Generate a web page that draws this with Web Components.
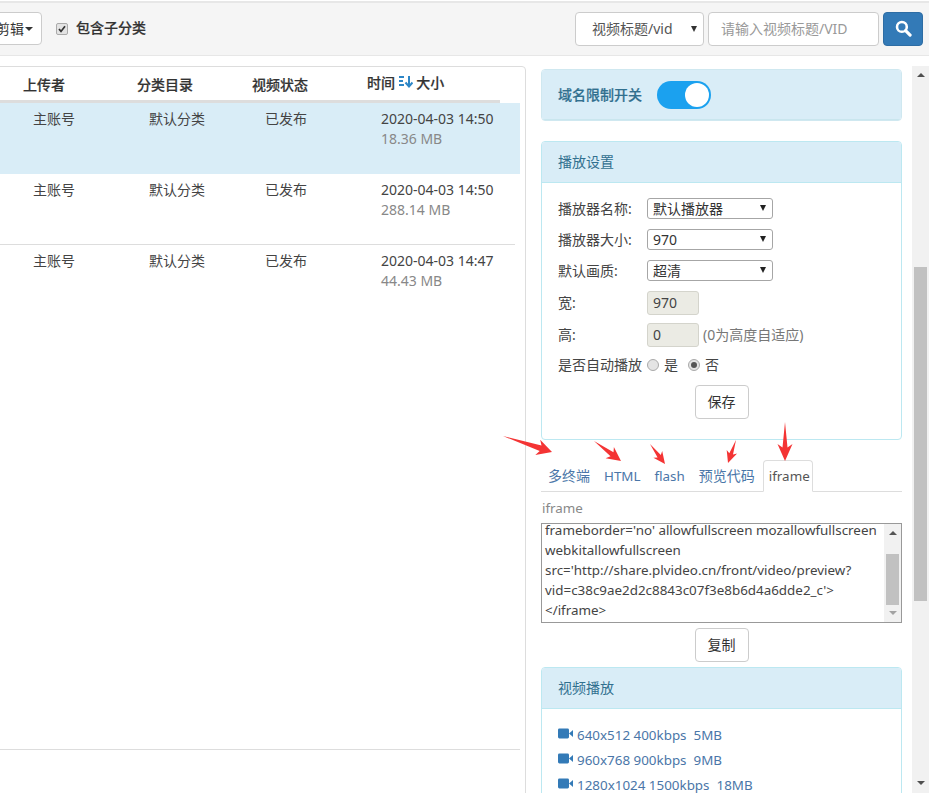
<!DOCTYPE html>
<html lang="zh">
<head>
<meta charset="utf-8">
<title>视频管理</title>
<style>
  html, body { margin: 0; padding: 0; background: #fff; }
  body {
    width: 949px;
    height: 793px;
    overflow: hidden;
    font: 14px/20px "Noto Sans", "Noto Sans CJK SC", sans-serif;
    color: #333;
  }
</style>
</head>
<body>
<vod-page>
  <vod-toolbar slot="top"></vod-toolbar>
  <vod-table slot="left">
    <vod-row slot="rows" active time="2020-04-03 14:50" size="18.36 MB"></vod-row>
    <vod-row slot="rows" time="2020-04-03 14:50" size="288.14 MB"></vod-row>
    <vod-row slot="rows" last time="2020-04-03 14:47" size="44.43 MB"></vod-row>
  </vod-table>
  <vod-side slot="right">
    <vod-panel plain>
      <span slot="title">域名限制开关</span>
      <vod-toggle slot="title"></vod-toggle>
    </vod-panel>
    <vod-player-form></vod-player-form>
    <vod-share></vod-share>
    <vod-panel>
      <span slot="title">视频播放</span>
      <vod-bitrates></vod-bitrates>
    </vod-panel>
  </vod-side>
  <vod-scrollbar slot="scroll"></vod-scrollbar>
  <vod-arrows slot="over"></vod-arrows>
</vod-page>

<script>
const shared = `
  * { box-sizing: border-box; }
`;

function define(name, html, extra) {
  class El extends HTMLElement {
    constructor() {
      super();
      this.attachShadow({ mode: "open" });
      this.shadowRoot.innerHTML = html;
      if (extra) extra(this);
    }
  }
  customElements.define(name, El);
}

define("vod-page", `
  <style>${shared}
    :host { display: block; position: relative; width: 949px; height: 793px; overflow: hidden; }
    .top { width: 929px; padding-top: 1px; }
    .main { display: flex; margin-top: 10px; width: 929px; height: 727px; }
    .l { display: block; flex: 0 0 526px; overflow: hidden; }
    .r { flex: 0 0 361px; margin-left: 15px; padding-top: 3px; overflow: hidden; }
    .s { flex: 0 0 17px; margin-left: 10px; }
  </style>
  <div class="top"><slot name="top"></slot></div>
  <div class="main">
    <div class="l"><slot name="left"></slot></div>
    <div class="r"><slot name="right"></slot></div>
    <div class="s"><slot name="scroll"></slot></div>
  </div>
  <slot name="over"></slot>
`);

define("vod-select", `
  <style>${shared}
    :host { display: block; }
    .box {
      display: flex; align-items: center; justify-content: space-between;
      width: 126px; height: 21px; padding: 0 6px 0 5px;
      background: #fff; border: 1px solid #a6a6a6; border-radius: 3px;
      color: #333; line-height: 19px;
    }
    .arrow { width: 0; height: 0; border-left: 3.5px solid transparent; border-right: 3.5px solid transparent; border-top: 6px solid #222; margin-top: -2px; }
  </style>
  <div class="box"><span><slot></slot></span><i class="arrow"></i></div>
`);

define("vod-button", `
  <style>${shared}
    :host { display: block; width: 54px; height: 34px; }
    .b {
      display: flex; align-items: center; justify-content: center;
      width: 100%; height: 100%;
      background: #fff; border: 1px solid #ccc; border-radius: 4px; color: #333;
    }
  </style>
  <div class="b"><slot></slot></div>
`);

define("vod-toolbar", `
  <style>${shared}
    :host { display: block; }
    .bar {
      display: flex; align-items: center; height: 55px; padding: 0 6px 1px 0;
      background: #f5f5f5; border-top: 2px solid #e7e7e7; border-bottom: 1px solid #e7e7e7;
      overflow: hidden;
    }
    .clip {
      display: flex; align-items: center; flex: none; width: 65px; height: 33px; margin-left: -23px;
      padding-left: 18px; background: #fff; border: 1px solid #ccc; border-radius: 4px;
      white-space: nowrap; color: #333;
    }
    .caret { display: inline-block; width: 0; height: 0; margin-left: 1px; border-left: 4px solid transparent; border-right: 4px solid transparent; border-top: 4px solid #333; }
    .check { flex: none; width: 12px; height: 12px; margin-left: 14px; border: 1px solid #aaa; border-radius: 2px; background: #e3e3e3; display: flex; }
    label { margin: -1px 0 0 8px; font-weight: 500; flex: none; color: #333; -webkit-text-stroke: 0.2px #333; }
    .spacer { flex: 1; }
    .sel {
      display: flex; align-items: center; justify-content: space-between;
      flex: none; width: 129px; height: 34px; padding: 0 6px 0 16px;
      background: #fff; border: 1px solid #ccc; border-radius: 4px; color: #555;
    }
    .arrow { width: 0; height: 0; border-left: 3.5px solid transparent; border-right: 3.5px solid transparent; border-top: 6px solid #333; }
    .inp {
      display: flex; align-items: center; flex: none; width: 171px; height: 34px; margin-left: 4px; padding-left: 12px;
      background: #fff; border: 1px solid #ccc; border-radius: 4px; color: #999;
    }
    .go {
      display: flex; align-items: center; justify-content: center;
      flex: none; width: 40px; height: 34px; margin-left: 4px;
      background: #337ab7; border: 1px solid #2e6da4; border-radius: 4px;
    }
  </style>
  <div class="bar">
    <div class="clip"><span>剪辑</span><i class="caret"></i></div>
    <span class="check"><svg width="10" height="10" viewBox="0 0 10 10"><path d="M2 5l2 2.4L8 2.2" fill="none" stroke="#333" stroke-width="1.7"/></svg></span>
    <label>包含子分类</label>
    <span class="spacer"></span>
    <div class="sel"><span>视频标题/vid</span><i class="arrow"></i></div>
    <div class="inp">请输入视频标题/VID</div>
    <div class="go"><svg width="17" height="17" viewBox="0 0 16 16"><circle cx="6.5" cy="6.5" r="4.6" fill="none" stroke="#fff" stroke-width="2.4"/><path d="M10 10l4.2 4.2" stroke="#fff" stroke-width="3" stroke-linecap="round"/></svg></div>
  </div>
`);

define("vod-table", `
  <style>${shared}
    :host { display: block; }
    .panel {
      position: relative; width: 536px; height: 740px; margin-left: -10px;
      background: #fff; border: 1px solid #ddd; border-radius: 4px;
    }
    .head {
      display: grid; grid-template-columns: 114px 115px 115px auto; align-items: center;
      width: 509px; height: 36px; padding: 2px 0 0 32px;
      border-bottom: 3px solid #ddd; font-weight: 500; color: #333; -webkit-text-stroke: 0.2px #333;
    }
    .head span { display: block; }
    .time { display: flex; align-items: center; gap: 5px; margin-top: -4px; }
    .rows { width: 529px; }
    .foot { position: absolute; left: 0; top: 682px; width: 529px; height: 1px; background: #ddd; }
  </style>
  <div class="panel">
    <div class="head">
      <span>上传者</span><span>分类目录</span><span>视频状态</span>
      <span class="time">时间
        <svg width="14" height="13" viewBox="0 0 14 13"><path d="M0 2h5M0 6h4M0 10h5" stroke="#2d86c6" stroke-width="2"/><path d="M10 1v10M6.5 7.5L10 11.5l3.5-4" fill="none" stroke="#2d86c6" stroke-width="2"/></svg>
        大小</span>
    </div>
    <div class="rows"><slot name="rows"></slot></div>
    <div class="foot"></div>
  </div>
`);

class VodRow extends HTMLElement {
  constructor() {
    super();
    this.attachShadow({ mode: "open" });
  }
  connectedCallback() {
    const active = this.hasAttribute("active");
    const last = this.hasAttribute("last");
    this.shadowRoot.innerHTML = `
      <style>${shared}
        :host { display: block; }
        .row {
          display: grid; grid-template-columns: 116px 116px 116px auto;
          height: 71px; padding: 6px 0 0 42px;
          background: ${active ? "#d9edf7" : "#fff"};
          border-bottom: 1px solid ${active ? "#d9edf7" : last ? "#fff" : "#ddd"};
          ${active ? "" : "margin-right: 5px;"}
          color: #444;
        }
        small { display: block; font-size: 14px; color: #888; }
      </style>
      <div class="row">
        <span>主账号</span><span>默认分类</span><span>已发布</span>
        <span>${this.getAttribute("time")}<small>${this.getAttribute("size")}</small></span>
      </div>`;
  }
}
customElements.define("vod-row", VodRow);

define("vod-side", `
  <style>${shared}
    :host { display: block; width: 361px; }
    ::slotted(vod-panel), ::slotted(vod-player-form) { margin-bottom: 20px; }
  </style>
  <slot></slot>
`);

define("vod-panel", `
  <style>${shared}
    :host { display: block; }
    .p { background: #fff; border: 1px solid #bce8f1; border-radius: 4px; overflow: hidden; }
    .h {
      display: flex; align-items: center; gap: 15px; height: 41px; padding: 0 16px;
      background: #d9edf7; color: #31708f;
    }
    .b { padding: 0 16px; }
    :host([plain]) .p { border-color: #cfe8f0; }
    :host([plain]) .h { height: 50px; font-weight: 500; -webkit-text-stroke: 0.2px #31708f; box-shadow: inset 0 -1px #c9e6ee; }
    :host([plain]) .b { display: none; }
    :host(:not([plain])) .h { border-bottom: 1px solid #bce8f1; }
  </style>
  <div class="p">
    <div class="h"><slot name="title"></slot></div>
    <div class="b"><slot></slot></div>
  </div>
`);

define("vod-toggle", `
  <style>${shared}
    :host { display: block; width: 54px; height: 28px; -webkit-text-stroke: 0; }
    .t { display: flex; justify-content: flex-end; align-items: center; height: 100%; padding: 2px; background: #1ba1ef; border-radius: 14px; }
    .k { width: 24px; height: 24px; border-radius: 50%; background: #fff; }
  </style>
  <div class="t"><i class="k"></i></div>
`);

define("vod-player-form", `
  <style>${shared}
    :host { display: block; }
    .f { display: flex; flex-direction: column; padding: 15px 0 20px; }
    .r { display: grid; grid-template-columns: 89px auto; align-items: center; color: #444; }
    .sel { height: 21px; margin-bottom: 10px; }
    .inp { height: 24px; margin-bottom: 8px; }
    .field { display: flex; align-items: center; gap: 4px; }
    .box {
      display: flex; align-items: center; width: 52px; height: 24px; padding-left: 5px;
      background: #ebebe4; border: 1px solid #d4d4cc; border-radius: 3px; color: #444;
    }
    .hint { color: #777; }
    .radio { margin-top: 0; height: 20px; margin-bottom: 10px; }
    .opts { display: flex; align-items: center; }
    .rb { width: 12px; height: 12px; border-radius: 50%; background: #e4e4e4; border: 1px solid #aaa; display: flex; align-items: center; justify-content: center; }
    .rb i { width: 6px; height: 6px; border-radius: 50%; background: #555; }
    .opts span { margin: 0 10px 0 5px; }
    .save { display: flex; justify-content: center; }
  </style>
  <vod-panel>
    <span slot="title">播放设置</span>
    <div class="f">
      <div class="r sel"><span>播放器名称:</span><vod-select>默认播放器</vod-select></div>
      <div class="r sel"><span>播放器大小:</span><vod-select>970</vod-select></div>
      <div class="r sel"><span>默认画质:</span><vod-select>超清</vod-select></div>
      <div class="r inp"><span>宽:</span><div class="field"><div class="box">970</div></div></div>
      <div class="r inp"><span>高:</span><div class="field"><div class="box">0</div><span class="hint">(0为高度自适应)</span></div></div>
      <div class="r radio"><span>是否自动播放</span><div class="opts"><i class="rb"></i><span>是</span><i class="rb"><i></i></i><span>否</span></div></div>
      <div class="save"><vod-button>保存</vod-button></div>
    </div>
  </vod-panel>
`);

define("vod-share", `
  <style>${shared}
    :host { display: block; }
    .tabs { display: flex; align-items: flex-end; height: 32px; padding-left: 1px; width: 362px; border-bottom: 1px solid #ddd; }
    .tab { height: 31px; line-height: 32px; padding: 0 6px; margin-right: 2px; color: #4a76a8; }
    .tab.lat { font-size: 13.4px; }
    .tab.on { flex: none; width: 50px; height: 32px; line-height: 30px; padding: 0 5px; color: #555; background: #fff; border: 1px solid #ddd; border-bottom-color: #fff; border-radius: 4px 4px 0 0; margin-bottom: -1px; }
    .label { margin: 6px 0 5px 1px; height: 20px; font-size: 13.4px; color: #888; line-height: 20px; }
    .code { display: flex; height: 100px; border: 1px solid #999; overflow: hidden; }
    .text { flex: 1; min-width: 0; padding: 0 0 0 3px; margin-top: -4px; white-space: nowrap; font-size: 13.4px; color: #444; }
    .bar { display: flex; flex-direction: column; align-items: center; flex: 0 0 17px; background: #f1f1f1; }
    .thumb { flex: none; width: 13px; height: 51px; margin: 19px 0 0; background: #c1c1c1; }
    .up, .dn { flex: none; width: 0; height: 0; border-left: 4px solid transparent; border-right: 4px solid transparent; }
    .up { margin-top: 7px; border-bottom: 4px solid #555; }
    .dn { margin-top: 6px; border-top: 4px solid #a3a3a3; }
    .copy { display: flex; justify-content: center; margin: 5px 0; }
  </style>
  <div class="tabs">
    <div class="tab">多终端</div><div class="tab lat">HTML</div><div class="tab lat">flash</div><div class="tab">预览代码</div><div class="tab lat on">iframe</div>
  </div>
  <div class="label">iframe</div>
  <div class="code">
    <div class="text">frameborder='no' allowfullscreen mozallowfullscreen<br>webkitallowfullscreen<br>src='http://share.plvideo.cn/front/video/preview?<br>vid=c38c9ae2d2c8843c07f3e8b6d4a6dde2_c'&gt;<br>&lt;/iframe&gt;</div>
    <div class="bar"><i class="up"></i><i class="thumb"></i><i class="dn"></i></div>
  </div>
  <div class="copy"><vod-button>复制</vod-button></div>
`);

define("vod-bitrates", `
  <style>${shared}
    :host { display: block; }
    .l { padding: 13px 0 0; }
    a { display: flex; align-items: center; gap: 4px; height: 25px; font-size: 13.4px; color: #4a76a8; text-decoration: none; white-space: pre; }
    svg { flex: none; margin-top: -3px; }
  </style>
  <div class="l">
    <a><svg width="15" height="11" viewBox="0 0 15 11"><rect x="0" y="0.5" width="11" height="10" rx="1.4" fill="#337ab7"/><path d="M11 5.5L15 2v7z" fill="#337ab7"/></svg>640x512 400kbps  5MB</a>
    <a><svg width="15" height="11" viewBox="0 0 15 11"><rect x="0" y="0.5" width="11" height="10" rx="1.4" fill="#337ab7"/><path d="M11 5.5L15 2v7z" fill="#337ab7"/></svg>960x768 900kbps  9MB</a>
    <a><svg width="15" height="11" viewBox="0 0 15 11"><rect x="0" y="0.5" width="11" height="10" rx="1.4" fill="#337ab7"/><path d="M11 5.5L15 2v7z" fill="#337ab7"/></svg>1280x1024 1500kbps  18MB</a>
  </div>
`);

define("vod-scrollbar", `
  <style>${shared}
    :host { display: block; height: 100%; }
    .t { display: flex; flex-direction: column; align-items: center; height: 100%; background: #f1f1f1; }
    .up, .dn { flex: none; width: 0; height: 0; border-left: 4px solid transparent; border-right: 4px solid transparent; }
    .up { margin-top: 7px; border-bottom: 4px solid #505050; }
    .dn { margin-top: 180px; border-top: 4px solid #505050; }
    .th { flex: none; width: 13px; height: 334px; margin-top: 190px; background: #c1c1c1; }
  </style>
  <div class="t"><i class="up"></i><i class="th"></i><i class="dn"></i></div>
`);

// red annotation arrows drawn over the screenshot
function arrowPoints(x1, y1, x2, y2, head, wing, neck) {
  const len = Math.hypot(x2 - x1, y2 - y1);
  const ux = (x2 - x1) / len, uy = (y2 - y1) / len;
  const nx = -uy, ny = ux;
  const bx = x2 - ux * head, by = y2 - uy * head;
  const mx = x2 - ux * head * 0.8, my = y2 - uy * head * 0.8;
  const p = (x, y, o) => `${(x + nx * o).toFixed(1)},${(y + ny * o).toFixed(1)}`;
  return [p(x1, y1, 0), p(mx, my, neck), p(bx, by, wing), p(x2, y2, 0), p(bx, by, -wing), p(mx, my, -neck)].join(" ");
}

define("vod-arrows", `
  <style>
    :host { position: absolute; left: 0; top: 0; width: 949px; height: 793px; pointer-events: none; }
    svg { display: block; }
    polygon { fill: #f43434; }
  </style>
  <svg width="949" height="793"></svg>
`, (el) => {
  const list = [
    [503, 436, 552, 452, 15, 8, 3],
    [594, 441, 621, 461, 14, 7, 2.5],
    [650, 444, 665, 464, 12, 5.5, 2],
    [736, 440, 728, 463, 12, 5.5, 2],
    [785, 422, 785, 461, 17, 7.5, 2.5],
  ];
  el.shadowRoot.querySelector("svg").innerHTML = list
    .map((a) => `<polygon points="${arrowPoints(...a)}"/>`)
    .join("");
});
</script>
</body>
</html>
